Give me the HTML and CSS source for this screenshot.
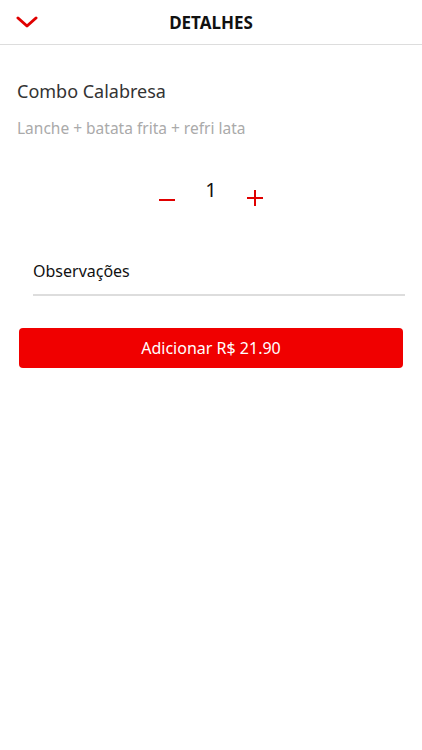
FILE: index.html
```html
<!DOCTYPE html>
<html lang="pt-BR">
<head>
    <meta charset="UTF-8">
    <meta name="viewport" content="width=device-width, initial-scale=1.0">
    <title>Detalhes</title>
    <link rel="stylesheet" href="styles.css">
</head>
<body>
    <header class="top-bar">
        <button class="back-button" aria-label="Fechar">
            <svg width="22" height="12" viewBox="0 0 22 12">
                <path d="M2 2 L11 10 L20 2" fill="none" stroke="#e00000" stroke-width="3" stroke-linecap="round" stroke-linejoin="round"/>
            </svg>
        </button>
        <h1>DETALHES</h1>
    </header>
    <main class="details">
        <div class="product-info">
            <h2 class="product-name">Combo Calabresa</h2>
            <p class="product-desc">Lanche + batata frita + refri lata</p>
        </div>
        <div class="quantity">
            <button class="qty-button minus" aria-label="Diminuir">
                <svg width="16" height="16" viewBox="0 0 16 16">
                    <path d="M0 8 H16" stroke="#e00000" stroke-width="2"/>
                </svg>
            </button>
            <span class="qty-value">1</span>
            <button class="qty-button plus" aria-label="Aumentar">
                <svg width="16" height="16" viewBox="0 0 16 16">
                    <path d="M0 8 H16 M8 0 V16" stroke="#e00000" stroke-width="2"/>
                </svg>
            </button>
        </div>
        <div class="notes">
            <input type="text" class="notes-input" placeholder="Observações">
        </div>
        <button class="add-button">Adicionar R$ 21.90</button>
    </main>
</body>
</html>
```

FILE: styles.css
```css
body {
    margin: 0;
    padding: 0;
    font-family: "Noto Sans", sans-serif;
    background-color: #fff;
    color: #222;
}
.top-bar {
    position: relative;
    height: 44px;
    border-bottom: 1px solid #ddd;
    display: flex;
    align-items: center;
    justify-content: center;
}
.top-bar h1 {
    margin: 0;
    font-size: 17px;
    font-weight: bold;
    color: #111;
}
.back-button {
    position: absolute;
    left: 16px;
    top: 16px;
    padding: 0;
    border: none;
    background: none;
    line-height: 0;
}
.product-info {
    padding: 33px 17px 0;
}
.product-name {
    margin: 0;
    font-size: 18px;
    font-weight: normal;
    line-height: 26px;
    color: #333;
}
.product-desc {
    margin: 14px 0 0;
    font-size: 15.5px;
    line-height: 20px;
    color: #aaa;
}
.quantity {
    display: flex;
    justify-content: center;
    align-items: flex-start;
    gap: 30px;
    margin-top: 40px;
}
.qty-button {
    padding: 0;
    border: none;
    background: none;
    line-height: 0;
}
.qty-button.minus {
    margin-top: 14px;
}
.qty-button.plus {
    margin-top: 12px;
}
.qty-value {
    font-size: 20px;
    line-height: 24px;
    color: #111;
}
.notes {
    margin: 46px 17px 0 33px;
}
.notes-input {
    display: block;
    width: 100%;
    box-sizing: border-box;
    padding: 6px 0 12px;
    border: none;
    border-bottom: 2px solid #ddd;
    font-family: inherit;
    font-size: 16px;
    outline: none;
}
.notes-input::placeholder {
    color: #111;
}
.add-button {
    display: block;
    width: calc(100% - 38px);
    height: 40px;
    margin: 32px 19px 0;
    border: none;
    border-radius: 4px;
    background-color: #f00000;
    color: #fff;
    font-family: inherit;
    font-size: 16px;
}
```
